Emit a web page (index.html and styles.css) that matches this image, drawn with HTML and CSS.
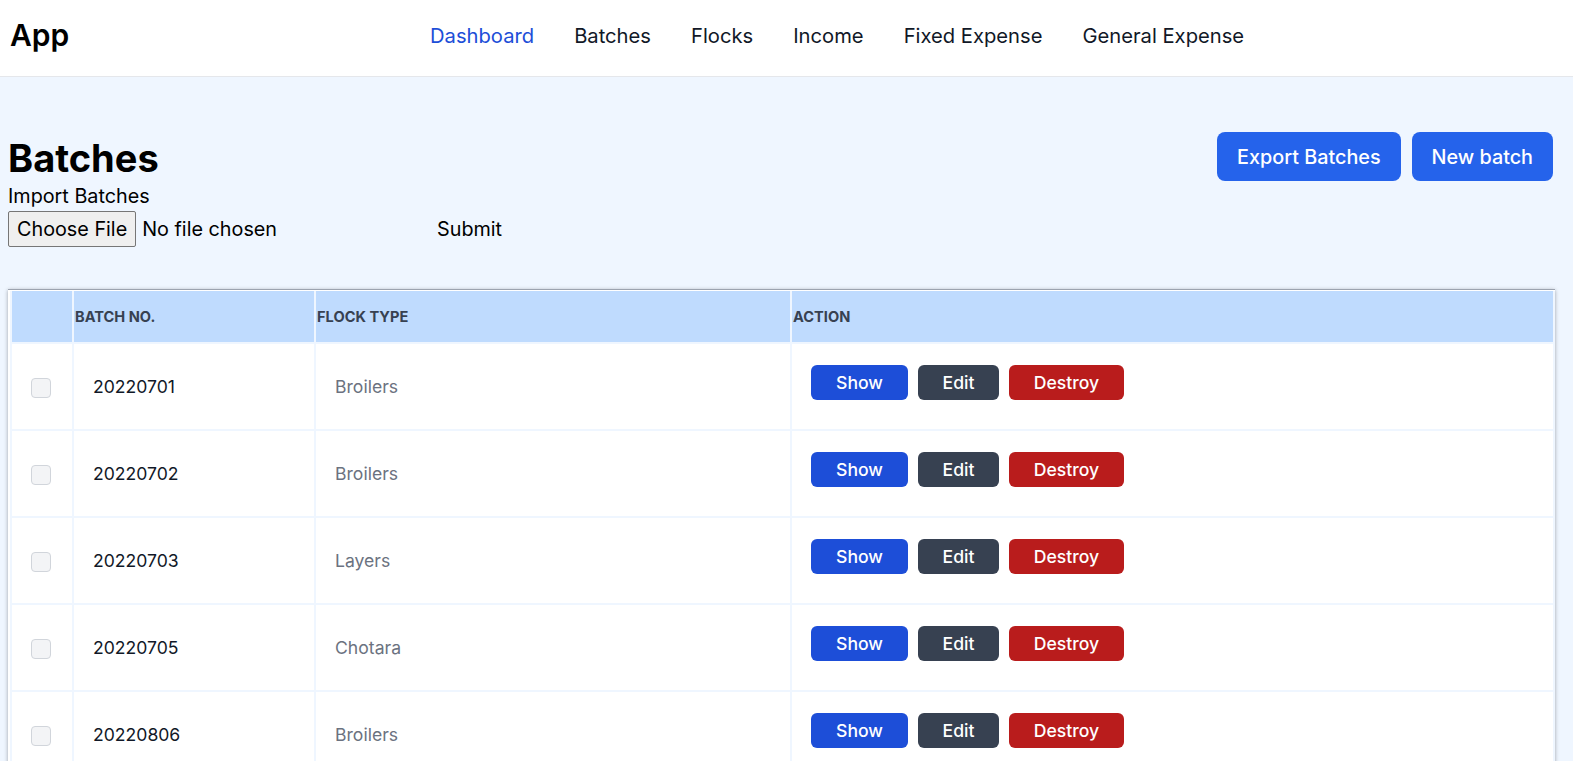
FILE: index.html
```html
<!DOCTYPE html>
<html>
<head>
<meta charset="utf-8">
<link rel="stylesheet" href="styles.css">
</head>
<body>
<header class="topbar">
  <div class="brand">App</div>
  <nav class="nav">
    <a class="nav-link active">Dashboard</a>
    <a class="nav-link">Batches</a>
    <a class="nav-link">Flocks</a>
    <a class="nav-link">Income</a>
    <a class="nav-link">Fixed Expense</a>
    <a class="nav-link">General Expense</a>
  </nav>
</header>
<main class="main">
  <div class="page-head">
    <div class="head-left">
      <h1 class="title">Batches</h1>
      <div class="import-label">Import Batches</div>
      <form class="import-form">
        <input type="file" class="file-input">
        <button type="button" class="submit">Submit</button>
      </form>
    </div>
    <div class="head-actions">
      <a class="btn-primary">Export Batches</a>
      <a class="btn-primary">New batch</a>
    </div>
  </div>
  <div class="table-wrap">
    <table class="table">
      <thead>
        <tr>
          <th class="col-check"></th>
          <th class="col-no">Batch No.</th>
          <th class="col-type">Flock Type</th>
          <th class="col-action">Action</th>
        </tr>
      </thead>
      <tbody>
        <tr>
          <td class="cell-check"><span class="checkbox"></span></td>
          <td class="cell-no">20220701</td>
          <td class="cell-type">Broilers</td>
          <td class="cell-action"><span class="btn btn-show">Show</span><span class="btn btn-edit">Edit</span><span class="btn btn-destroy">Destroy</span></td>
        </tr>
        <tr>
          <td class="cell-check"><span class="checkbox"></span></td>
          <td class="cell-no">20220702</td>
          <td class="cell-type">Broilers</td>
          <td class="cell-action"><span class="btn btn-show">Show</span><span class="btn btn-edit">Edit</span><span class="btn btn-destroy">Destroy</span></td>
        </tr>
        <tr>
          <td class="cell-check"><span class="checkbox"></span></td>
          <td class="cell-no">20220703</td>
          <td class="cell-type">Layers</td>
          <td class="cell-action"><span class="btn btn-show">Show</span><span class="btn btn-edit">Edit</span><span class="btn btn-destroy">Destroy</span></td>
        </tr>
        <tr>
          <td class="cell-check"><span class="checkbox"></span></td>
          <td class="cell-no">20220705</td>
          <td class="cell-type">Chotara</td>
          <td class="cell-action"><span class="btn btn-show">Show</span><span class="btn btn-edit">Edit</span><span class="btn btn-destroy">Destroy</span></td>
        </tr>
        <tr>
          <td class="cell-check"><span class="checkbox"></span></td>
          <td class="cell-no">20220806</td>
          <td class="cell-type">Broilers</td>
          <td class="cell-action"><span class="btn btn-show">Show</span><span class="btn btn-edit">Edit</span><span class="btn btn-destroy">Destroy</span></td>
        </tr>
      </tbody>
    </table>
  </div>
</main>
</body>
</html>
```
FILE: styles.css
```css
* { box-sizing: border-box; }
html, body { margin: 0; padding: 0; }
body {
  font-family: Inter, "Noto Sans", sans-serif;
  background: #eff6ff;
  color: #000;
  overflow: hidden;
}
.topbar {
  height: 77px;
  background: #fff;
  border-bottom: 1px solid #e5e7eb;
  display: flex;
  align-items: center;
  padding: 0 10px 6px 10px;
}
.brand {
  font-size: 30px;
  font-weight: 600;
  width: 420px;
}
.nav {
  display: flex;
  gap: 40px;
  font-size: 20.2px;
}
.nav-link { color: #111827; }
.nav-link.active { color: #1d4ed8; }
.main {
  padding: 54px 20px 0 8px;
}
.page-head {
  display: flex;
  justify-content: space-between;
  align-items: flex-start;
}
.title {
  margin: 0;
  font-size: 38px;
  font-weight: 700;
  line-height: 46px;
  margin-top: 4px;
}
.import-label {
  font-size: 19.8px;
  line-height: 26px;
  margin-top: 2px;
}
.import-form {
  display: flex;
  align-items: center;
  margin-top: 2px;
}
.file-input {
  font-family: Inter, sans-serif;
  font-size: 19.8px;
  width: 300px;
  height: 36px;
}
.file-input::file-selector-button {
  font-family: Inter, sans-serif;
  font-size: 19.8px;
  height: 36px;
  padding: 0 8px;
  margin-right: 6px;
  background: #efefef;
  border: 1px solid #767676;
  border-radius: 2px;
}
.submit {
  font-family: Inter, sans-serif;
  font-size: 19.8px;
  background: transparent;
  border: none;
  margin-left: 129px;
  padding: 0;
  color: #000;
}
.head-actions {
  display: flex;
  gap: 11px;
  margin-top: 1px;
}
.btn-primary {
  background: #2563eb;
  color: #fff;
  font-size: 19.8px;
  font-weight: 500;
  height: 49px;
  padding: 0 20px;
  border-radius: 8px;
  display: flex;
  align-items: center;
}
.table-wrap {
  margin-top: 42px;
  margin-right: -2px;
  border-top: 1px solid #9ca3af;
  box-shadow: 0 1px 4px rgba(0,0,0,0.35);
  background: #fff;
  padding: 1px 0 0 2px;
}
.table {
  width: 100%;
  border-collapse: collapse;
}
.table th, .table td {
  border: 2px solid #eff6ff;
}
.table thead tr { background: #bfdbfe; }
.table th {
  height: 52px;
  text-align: left;
  font-size: 14.6px;
  font-weight: 700;
  text-transform: uppercase;
  color: #374151;
  padding: 0 1px;
}
.table tr:first-child th { border-top: none; }
.col-check { width: 62px; }
.col-no { width: 242px; }
.col-type { width: 476px; }
.table td {
  height: 87px;
  font-size: 17.6px;
}
.cell-check { text-align: center; padding: 0; }
.checkbox {
  display: inline-block;
  width: 20px;
  height: 20px;
  background: #f3f4f6;
  border: 1px solid #d1d5db;
  border-radius: 4px;
  vertical-align: middle;
  margin-right: 2px;
}
.cell-no { padding-left: 19px; color: #111827; }
.cell-type { padding-left: 19px; color: #6b7280; }
.cell-action { padding-left: 19px; padding-bottom: 10px; }
.btn {
  display: inline-flex;
  align-items: center;
  justify-content: center;
  height: 35px;
  border-radius: 6px;
  color: #fff;
  font-weight: 500;
  margin-right: 10px;
}
.btn-show { background: #1d4ed8; width: 97px; }
.btn-edit { background: #374151; width: 81px; }
.btn-destroy { background: #b91c1c; width: 115px; }
```
